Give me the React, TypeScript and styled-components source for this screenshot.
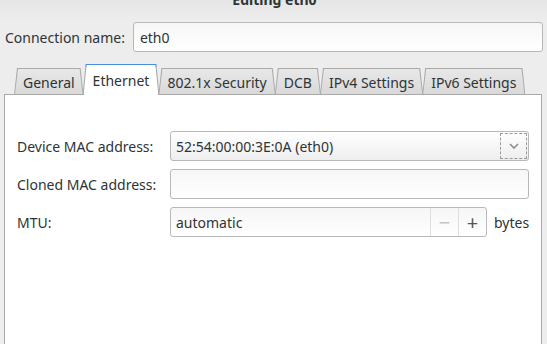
import styled, { createGlobalStyle } from "styled-components";

const GlobalStyle = createGlobalStyle`
  html, body {
    margin: 0;
    height: 100%;
    overflow: hidden;
  }
  body {
    background: #ededed;
    font-family: "Noto Sans", "DejaVu Sans", sans-serif;
    font-size: 14px;
    color: #2e3436;
  }
`;

const tabs = ["General", "Ethernet", "802.1x Security", "DCB", "IPv4 Settings", "IPv6 Settings"];
const activeTab = "Ethernet";

const App = () => {
  return (
    <Window>
      <GlobalStyle />
      <TitleBar>
        <Title>Editing eth0</Title>
      </TitleBar>
      <NameRow>
        <Label>Connection name:</Label>
        <Entry>eth0</Entry>
      </NameRow>
      <Notebook>
        <TabStrip>
          {tabs.map((t) => (
            <Tab key={t} $active={t === activeTab}>
              <TabLabel>{t}</TabLabel>
            </Tab>
          ))}
        </TabStrip>
        <Panel>
          <Form>
            <Label>Device MAC address:</Label>
            <Combo>
              <ComboText>52:54:00:00:3E:0A (eth0)</ComboText>
              <ComboButton>
                <svg width="10" height="6" viewBox="0 0 10 6">
                  <path d="M1 1 L5 5 L9 1" fill="none" stroke="#8b8e8f" strokeWidth="1.6" />
                </svg>
              </ComboButton>
            </Combo>

            <Label>Cloned MAC address:</Label>
            <Entry />

            <Label>MTU:</Label>
            <MtuRow>
              <Spin>
                <SpinText>automatic</SpinText>
                <SpinButton $disabled>−</SpinButton>
                <SpinButton>+</SpinButton>
              </Spin>
              <Unit>bytes</Unit>
            </MtuRow>
          </Form>
        </Panel>
      </Notebook>
    </Window>
  );
};

const Window = styled.div`
  display: flex;
  flex-direction: column;
  height: 344px;
`;

const TitleBar = styled.div`
  height: 22px;
  display: flex;
  justify-content: center;
  background: linear-gradient(#e6e6e6, #ededed);
`;

const Title = styled.div`
  font-weight: bold;
  line-height: 14px;
  margin-top: -7px;
  margin-left: 2px;
  color: #2e3436;
`;

const NameRow = styled.div`
  display: flex;
  align-items: center;
  gap: 8px;
  padding: 0 4px 0 5px;
`;

const Label = styled.span`
  white-space: nowrap;
  color: #2e3436;
`;

const Entry = styled.div`
  flex: 1;
  height: 30px;
  box-sizing: border-box;
  border: 1px solid #b8b8b8;
  border-radius: 3px;
  background: linear-gradient(#f6f6f6, #ffffff);
  padding: 0 6px;
  display: flex;
  align-items: center;
  color: #2e3436;
`;

const Notebook = styled.div`
  flex: 1;
  display: flex;
  flex-direction: column;
  margin: 12px 5px 0 4px;
`;

const TabStrip = styled.div`
  display: flex;
  align-items: flex-end;
  padding-left: 10px;
  margin-bottom: -1px;
  position: relative;
  z-index: 1;
`;

const trapezoid = "polygon(3px 0, calc(100% - 3px) 0, 100% 100%, 0 100%)";

const Tab = styled.div<{ $active?: boolean }>`
  position: relative;
  height: ${(p) => (p.$active ? "31px" : "27px")};
  padding: 0 ${(p) => (p.$active ? "10px" : "9px")};
  margin-right: -1px;
  display: flex;
  align-items: center;
  box-sizing: border-box;
  clip-path: ${trapezoid};
  background: ${(p) =>
    p.$active ? "linear-gradient(#4a90d9 0 3px, #a9a9a9 3px)" : "#aaaaaa"};

  &::before {
    content: "";
    position: absolute;
    inset: ${(p) => (p.$active ? "1px 1px 0 1px" : "1px 1px 1px 1px")};
    clip-path: ${trapezoid};
    background: ${(p) =>
      p.$active ? "#ffffff" : "linear-gradient(#e8e8e8, #d9d9d9)"};
  }
`;

const TabLabel = styled.span`
  position: relative;
  padding-top: 2px;
  white-space: nowrap;
`;

const Panel = styled.div`
  flex: 1;
  background: #ffffff;
  border: 1px solid #a9a9a9;
  border-bottom: none;
`;

const Form = styled.div`
  display: grid;
  grid-template-columns: 141px 1fr;
  column-gap: 12px;
  row-gap: 8px;
  align-items: center;
  padding: 36px 12px 0 12px;
`;

const Combo = styled.div`
  height: 30px;
  box-sizing: border-box;
  border: 1px solid #b8b8b8;
  border-radius: 3px;
  background: linear-gradient(#ffffff, #eeeeee);
  display: flex;
  align-items: stretch;
`;

const ComboText = styled.span`
  flex: 1;
  display: flex;
  align-items: center;
  padding-left: 5px;
`;

const ComboButton = styled.div`
  width: 27px;
  margin: 1px 1px 1px 0;
  border: 1px dashed #9a9a9a;
  border-radius: 1px;
  box-sizing: border-box;
  display: flex;
  align-items: center;
  justify-content: center;
`;

const MtuRow = styled.div`
  display: flex;
  align-items: center;
  gap: 7px;
`;

const Spin = styled.div`
  width: 317px;
  height: 30px;
  box-sizing: border-box;
  border: 1px solid #b8b8b8;
  border-radius: 3px;
  background: linear-gradient(#f6f6f6, #ffffff);
  display: flex;
  align-items: stretch;
`;

const SpinText = styled.span`
  flex: 1;
  display: flex;
  align-items: center;
  padding-left: 5px;
`;

const SpinButton = styled.div<{ $disabled?: boolean }>`
  width: 27px;
  border-left: 1px solid #dedede;
  display: flex;
  align-items: center;
  justify-content: center;
  font-size: 20px;
  color: ${(p) => (p.$disabled ? "#c4c4c4" : "#555753")};
`;

const Unit = styled.span`
  color: #2e3436;
`;

export default App;
